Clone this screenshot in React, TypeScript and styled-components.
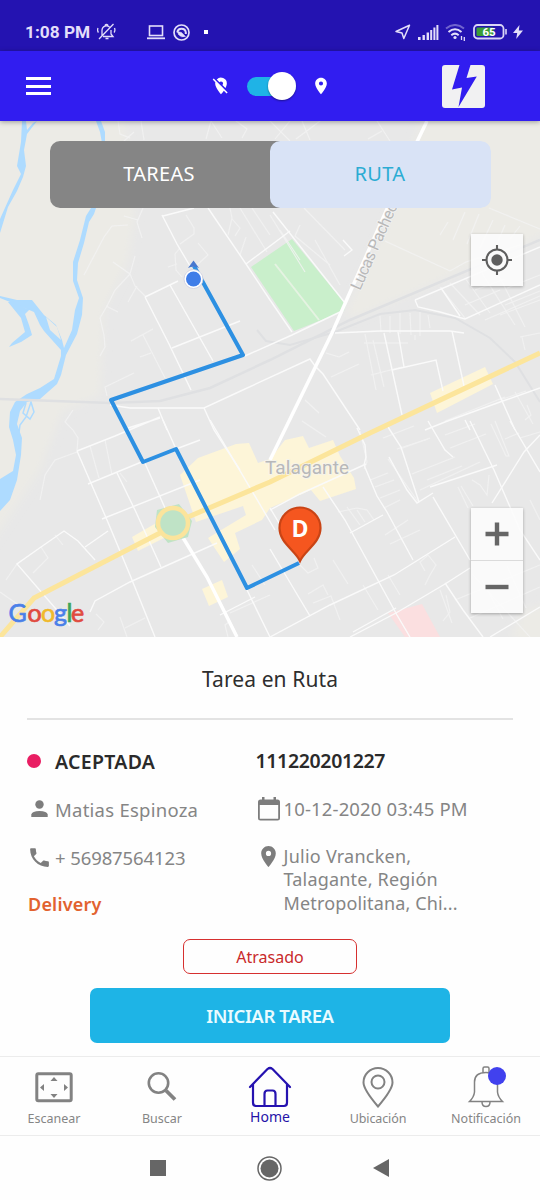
import React from "react";
import styled, { createGlobalStyle } from "styled-components";

const GlobalStyle = createGlobalStyle`
  * { box-sizing: border-box; }
  body { margin: 0; background: #fefefe; font-family: "Noto Sans", "Open Sans", sans-serif; }
  button { font-family: inherit; margin: 0; padding: 0; border: 0; background: none; }
  svg { display: block; flex: none; }
`;

const Screen = styled.div`
  width: 540px;
  height: 1200px;
  display: flex;
  flex-direction: column;
  overflow: hidden;
  background: #fefefe;
`;

const StatusBar = styled.div`
  height: 51px;
  flex: none;
  display: flex;
  align-items: center;
  padding: 13px 17px 0 25px;
  background: #2413b1;
  color: #e3defa;
`;

const Clock = styled.span`
  font: 700 17.3px/20px Roboto, sans-serif;
  width: 72px;
  white-space: nowrap;
`;

const StatusGroup = styled.div<{ $gap: number; $left?: number }>`
  display: flex;
  align-items: center;
  gap: ${(p) => p.$gap}px;
  margin-left: ${(p) => (p.$left === undefined ? "auto" : `${p.$left}px`)};
`;

const Dot = styled.i`
  width: 3.5px;
  height: 3.5px;
  margin-left: 6px;
  background: #fff;
`;

const Header = styled.header`
  position: relative;
  z-index: 1;
  height: 70px;
  flex: none;
  display: flex;
  align-items: center;
  padding: 0 55px 0 26px;
  background: #311df0;
  color: #fff;
  box-shadow: 0 1px 5px rgba(0, 0, 0, 0.35);
`;

const MenuButton = styled.button`
  width: 25px;
  height: 18px;
  display: flex;
  flex-direction: column;
  justify-content: space-between;
`;

const MenuBar = styled.i`
  height: 3px;
  background: #fff;
`;

const LocationSwitch = styled.div`
  display: flex;
  align-items: center;
  margin-left: 160px;
`;

const Track = styled.div`
  width: 49px;
  height: 19px;
  margin: 0 15px 0 16px;
  border-radius: 10px;
  background: #1fb3e6;
  display: flex;
  align-items: center;
  justify-content: flex-end;
`;

const Knob = styled.i`
  width: 28px;
  height: 28px;
  flex: none;
  border-radius: 50%;
  background: #fff;
  box-shadow: 0 1px 2px rgba(0, 0, 0, 0.4);
`;

const LogoSlot = styled.div`
  margin-left: auto;
`;

const MapArea = styled.section`
  position: relative;
  height: 516px;
  flex: none;
  overflow: hidden;
`;

const Tabs = styled.div`
  position: absolute;
  left: 50px;
  top: 20px;
  width: 441px;
  height: 67px;
  display: flex;
  border-radius: 10px;
  overflow: hidden;
  background: linear-gradient(90deg, #858585 55%, transparent 55%);
`;

const Tab = styled.button<{ $active?: boolean }>`
  flex: ${(p) => (p.$active ? "0 0 221px" : "1")};
  padding: 0 ${(p) => (p.$active ? 1 : 2)}px 2px 0;
  border-radius: ${(p) => (p.$active ? "10px" : "0")};
  background: ${(p) => (p.$active ? "#d9e3f6" : "transparent")};
  color: ${(p) => (p.$active ? "#2bacd3" : "#fff")};
  font-size: 20px;
  letter-spacing: 0.3px;
`;

const MapButton = styled.button`
  width: 52px;
  height: 52px;
  display: flex;
  align-items: center;
  justify-content: center;
  background: rgba(255, 255, 255, 0.86);
`;

const MapControls = styled.div<{ $top: number }>`
  position: absolute;
  right: 17px;
  top: ${(p) => p.$top}px;
  display: flex;
  flex-direction: column;
  gap: 1px;
  background: rgba(200, 200, 200, 0.4);
  box-shadow: 0 1px 3px rgba(0, 0, 0, 0.3);
`;

const Task = styled.section`
  height: 419px;
  flex: none;
  display: flex;
  flex-direction: column;
  align-items: center;
`;

const Title = styled.h1`
  width: 486px;
  height: 83px;
  flex: none;
  margin: 0;
  text-align: center;
  font-size: 21px;
  line-height: 84px;
  font-weight: 400;
  letter-spacing: 0.1px;
  color: #2e2e2e;
  border-bottom: 2px solid #e3e3e3;
`;

const Details = styled.div`
  width: 486px;
  height: 219px;
  flex: none;
  display: grid;
  grid-template-columns: 228.5px 1fr;
  padding-top: 17px;
`;

const Column = styled.div`
  display: flex;
  flex-direction: column;
`;

const Row = styled.div<{ $h?: number; $spacing?: number }>`
  height: ${(p) => p.$h ?? 48}px;
  display: flex;
  align-items: center;
  font-size: 18.5px;
  color: #858585;
  white-space: nowrap;
  letter-spacing: ${(p) => p.$spacing ?? 0}px;
`;

const IconCell = styled.span<{ $w: number; $left?: number }>`
  width: ${(p) => p.$w}px;
  flex: none;
  padding-left: ${(p) => p.$left ?? 0}px;
  color: #7d7d7d;
`;

const Strong = styled.span<{ $spacing: number }>`
  font-size: 19.5px;
  font-weight: 600;
  color: #2a2a2a;
  letter-spacing: ${(p) => p.$spacing}px;
`;

const StateDot = styled.i`
  width: 14px;
  height: 14px;
  flex: none;
  margin-right: 14px;
  border-radius: 50%;
  background: #e91e63;
`;

const Kind = styled.span`
  font-size: 18px;
  font-weight: 600;
  letter-spacing: 0.2px;
  padding-left: 1px;
  color: #e2622f;
`;

const AddressRow = styled.div`
  display: flex;
  align-items: flex-start;
  padding-top: 11px;
`;

const Address = styled.p`
  margin: 0;
  padding-top: 1px;
  font-size: 18px;
  line-height: 23.4px;
  color: #858585;
  white-space: nowrap;
`;

const AddressLine = styled.span<{ $spacing: number }>`
  display: block;
  letter-spacing: ${(p) => p.$spacing}px;
`;

const LateTag = styled.div`
  width: 174px;
  height: 35px;
  flex: none;
  border: 1.5px solid #d6302f;
  border-radius: 7px;
  color: #c92a2a;
  font-size: 16px;
  line-height: 35px;
  text-align: center;
`;

const StartButton = styled.button`
  width: 360px;
  height: 55px;
  flex: none;
  margin-top: 14px;
  border-radius: 7px;
  background: #1eb4e6;
  color: #e9fbff;
  font-size: 18.5px;
  font-weight: 600;
  letter-spacing: -0.4px;
`;

const BottomNav = styled.nav`
  height: 80px;
  flex: none;
  display: grid;
  grid-template-columns: repeat(5, 108px);
  border-top: 1px solid #ececec;
  border-bottom: 1px solid #ececec;
`;

const NavItem = styled.button<{ $active?: boolean; $spacing?: number }>`
  display: flex;
  flex-direction: column;
  align-items: center;
  padding-top: 7px;
  color: ${(p) => (p.$active ? "#2512a8" : "#858585")};
  font-size: ${(p) => (p.$active ? 14 : 12.5)}px;
  line-height: 18px;
  letter-spacing: ${(p) => p.$spacing ?? 0}px;
`;

const NavIcon = styled.span<{ $active?: boolean }>`
  height: ${(p) => (p.$active ? 44 : 46)}px;
`;

const SystemNav = styled.div`
  height: 64px;
  flex: none;
  display: flex;
  justify-content: center;
  align-items: center;
  gap: 91px;
  padding-right: 1px;
`;

const fineRoads = [
  // west and north-west lanes
  "M84 275 L104 237 L112 226 L128 225", "M118 121 L120 134 L130 138 M124 141 L134 132 M141 121 L144 140",
  "M143 208 L137 222 L142 238 M138 220 L124 216", "M113 262 L130 274 L135 256 M130 274 L135 286 L146 297 M137 286 L128 302 M130 274 L115 290 L107 306 L100 318 L104 335 L105 347 L100 356",
  "M106 306 L118 312", "M131 341 L153 329 M143 335 L165 378 M140 357 L151 353", "M107 396 L105 387 L134 373",
  "M180 248 L175 254 L176 270 L182 277 M168 267 L177 264 M186 215 L194 228 L194 234 L180 244 M198 243 L208 255 L197 265",
  "M230 208 L232 218 L228 235 M232 219 L240 228 L235 236 M240 208 L267 252 M252 208 L270 235 M246 237 L240 255",
  "M206 139 L211 121 L222 138 M236 121 L247 129 L242 138", "M270 121 L290 141 M296 139 L320 121 M302 121 L310 140 M290 121 L275 139",
  "M270 215 L305 272 M280 230 L300 260 M300 225 L295 236 L330 265 M315 240 L340 285 M304 208 L345 250",
  "M377 121 L390 141 M368 139 L382 131",
  // lanes beside the river bend
  "M73 410 L65 422 L73 430 L78 438 L77 451", "M77 452 L55 460 L45 475 L42 490 L40 500",
  "M90 446 L99 478 M105 440 L112 475 M120 473 L127 482",
  // north-east plots
  "M440 235 L448 222 M453 240 L465 212 M467 244 L479 214 M480 248 L493 220 M495 248 L505 225 M510 239 L520 226 M489 208 L540 229",
  "M385 241 L450 271 L466 262 L520 245",
  "M380 316 L381 332 M390 316 V333 M400 313 V334 M410 313 L411 335 M420 312 V336 M428 315 L430 328 M415 335 V340",
  "M365 334 L376 390 M373 340 L384 387 M364 343 H408 M371 375 L402 367 M326 353 L339 357 L349 352 M331 377 L359 364",
  "M440 287 L465 318 M450 283 L480 315 M465 278 L490 313 M480 270 L515 325 M495 268 L525 327 M507 288 L540 275 M505 305 L540 291 M500 315 L540 300 M475 290 L505 279 M465 305 L500 290",
  "M485 320 L540 296 M520 337 L540 333 M522 337 L525 350",
  // south-east blocks
  "M305 400 L319 413 M360 431 L367 462 L364 469 M302 421 L326 437 M383 438 L414 426 M397 449 L428 439",
  "M400 449 L430 438 M412 474 L455 457 M420 490 L480 462 M427 480 L462 466 M495 421 L509 456 L506 456 L491 424 M505 439 L519 433",
  "M370 480 L388 473 M375 487 L394 480 M380 498 L400 490 M384 508 L400 500 M385 535 L408 520 M390 544 L420 530 M388 459 L419 503",
  "M461 486 L473 506 M472 480 L480 485 L487 495 L489 475 M458 487 L468 508",
  "M357 510 L365 522 M347 507 L360 525 M338 512 L357 508 L367 510 L374 520",
  "M308 594 L323 585 L328 595 M313 603 L331 596 L340 620 M333 560 L348 584 M300 565 L308 573 L318 568 L314 558",
  "M363 585 L378 610 M388 575 L400 595 M425 585 L430 575 L436 565 L428 555 L420 562 L425 571",
  "M440 590 L452 623 M446 595 L450 612 L443 621 M472 574 L530 637 M455 600 L540 565 M470 618 L540 587 M482 580 L503 619 M507 566 L526 608",
  "M530 500 L540 520 M520 438 L540 432",
  "M500 400 L526 391 M445 421 L505 397 M445 435 L475 424 M450 448 L486 434 M515 392 L533 424 M527 405 L531 415 L525 420",
  // south-west corner
  "M0 592 L20 606 M17 564 L6 580 M41 547 L48 558 L33 573 M55 535 L63 545 M96 614 L104 622 L98 630 M125 628 L145 618 M120 617 L127 637",
  "M228 637 L225 625 L230 621 M230 613 L270 595 M252 565 L265 585",
];

const roads = [
  "M208 208 L246 264 L270 300 L292 332 M246 264 L290 231 M162 215 L177 244 L190 266 M163 216 L194 208",
  "M145 297 L169 344 L191 390 M145 297 L178 281 M170 285 L213 361 M172 348 L240 321",
  "M110 405 L130 408 H204 L245 389 L310 359 L315 366 L323 374 L360 430 M204 408 L214 430 L240 470 M245 356 L292 335 L340 312",
  "M128 428 L160 418 M158 408 L167 430 M77 451 L115 436 L160 417 M77 451 L107 520 L130 575 L155 637",
  "M88 484 L144 461 M144 461 L165 508 M117 473 L135 510 L161 567 M102 519 L200 480 M85 547 L108 531",
  "M95 560 L78 541 L64 531 L41 547 L17 564 L62 616 L70 626 M90 612 L95 601 L130 582 L217 543",
  "M163 420 L176 449 M210 420 L275 530 M176 449 L200 440 M273 212 L345 303",
  "M343 240 L352 250 L344 256",
  "M335 333 L380 331 L450 331 L464 333 M384 333 L402 415 M398 332 L404 367 M392 370 L436 360 L443 391 M452 331 L464 386",
  "M415 300 L418 307 L440 312 L465 319 L540 285 M415 300 L540 247 M441 288 L460 316",
  "M270 508 L285 533 M323 487 L345 520 L397 615 L410 637 M270 510 L300 494 L366 464",
  "M357 428 L365 445 L366 457 L364 465 M270 549 L310 616 M364 465 L377 496 L387 512 L413 560",
  "M388 427 L401 447 L419 502 M428 421 L445 450 L453 457 M430 487 L497 465 M389 457 L407 490 L417 503 L433 493",
  "M433 497 L470 560 M470 421 L494 470 L520 530 L540 560",
  "M540 435 L524 452 L492 503 M510 421 L540 472",
  "M270 637 L330 605 L394 575 L455 537 M350 533 L383 515 M350 637 L396 613 L445 584 L470 568 M353 632 L396 608",
  "M445 583 L463 610 L483 637 M540 607 L490 637",
  "M425 430 L445 422 L500 402 L540 388 M495 385 L515 430 M465 420 L470 430",
  "M220 615 L255 597 M247 590 L270 637",
];

const wordmark = [
  { char: "G", x: 8.5, color: "#4a7fe8" },
  { char: "o", x: 27.5, color: "#e04a3f" },
  { char: "o", x: 41, color: "#f0b92c" },
  { char: "g", x: 54, color: "#4a7fe8" },
  { char: "l", x: 66.5, color: "#3da45a" },
  { char: "e", x: 71, color: "#e04a3f" },
];

const MapDrawing = () => (
  <svg width="540" height="516" viewBox="0 121 540 516">
    <defs>
      <filter id="soft" x="-10%" y="-10%" width="120%" height="120%">
        <feGaussianBlur stdDeviation="4" />
      </filter>
    </defs>
    <rect y="121" width="540" height="516" fill="#e8e8e8" />
    <g fill="#ecebe6" filter="url(#soft)">
      <path d="M-20 100 H122 L135 215 L128 262 L104 310 L100 395 L62 412 L40 470 L-20 560 Z" />
      <path d="M428 100 H560 V228 L355 318 L345 314 L395 205 Z" />
      <path d="M510 637 L525 610 L560 600 V660 Z" />
    </g>
    <g fill="#aedbff">
      <path d="M22 121 H26 L27 130 L33 123 L37 121 L27 134 L24 150 L26 166 L23 177 L17 191 L8 207 L0 233 V219 L13 190 L21 174 L17 166 L21 142 Z" />
      <path d="M96 121 H101 L105 132 L105 143 L102 143 L100 132 Z" />
      <path d="M91 208 L96 208 L94 214 L89 222 L84 243 L78 263 L77 280 L83 298 L82 315 L77 334 L66 355 L61 375 L57 384 L40 399 L27 402 L20 411 L17 424 L22 438 L21 455 L17 480 L10 500 L0 511 V479 L13 471 L16 455 L13 440 L9 427 L10 412 L15 402 L27 394 L40 388 L54 379 L61 356 L61 350 L44 331 L40 325 L34 312 L15 304 L0 298 V296 L17 300 L32 300 L44 315 L56 325 L62 340 L64 348 L72 330 L75 310 L79 298 L73 281 L73 262 L80 240 L86 216 Z" />
      <path d="M15 302 L25 308 L30 309 L25 314 L29 325 L32 335 L21 342 L9 347 L12 343 L25 332 L21 318 L8 302 Z" />
    </g>
    <path d="M26 403 L23 413 L30 419 L34 412 L31 402 L26 417 L20 425 L18 440" fill="none" stroke="#aedbff" strokeWidth="1.5" />
    <path d="M46 317 L57 327 L61 340 L50 330 Z" fill="#ecebe6" />

    <path d="M0 399 L110 403 L160 401 L210 388 L270 360 L350 320 L540 240" fill="none" stroke="#dfe0e2" strokeWidth="2.5" />
    <path d="M257 330 L266 341 L290 345 L335 332 L380 314 L415 310 L455 318 L490 338 L515 362 L540 402" fill="none" stroke="#dfe0e2" strokeWidth="2" />

    <path d="M251 267 L292 239 L346 305 L344 311 L294 331 Z" fill="#c9efcb" />
    <path d="M275 264 L319 320" stroke="#e5f3e2" strokeWidth="2" />

    <g fill="#fdf5d8">
      <path d="M180 475 L198 458 L236 444 L249 443 L258 463 L270 459 L285 440 L303 436 L309 448 L333 440 L340 456 L354 478 L356 489 L320 501 L311 490 L270 508 L262 520 L235 533 L240 549 L224 562 L208 538 L246 515 L243 506 L196 522 Z" />
      <path d="M132 537 L158 522 L164 538 L138 551 Z" />
      <path d="M202 589 L222 580 L228 597 L209 606 Z" />
      <path d="M430 393 L485 367 L493 384 L437 413 Z" />
    </g>
    <path d="M388 613 L422 604 L440 637 H405 Z" fill="#fbdfe0" />

    <g fill="none" stroke="#f3f3f3" strokeWidth="1.1" opacity="0.85">
      {fineRoads.map((d) => <path key={d} d={d} />)}
    </g>
    <g fill="none" stroke="#fafafa" strokeWidth="1.4">
      {roads.map((d) => <path key={d} d={d} />)}
    </g>
    <path d="M427 121 L415 146 L351 290 L332 333 L270 460" fill="none" stroke="#fff" strokeWidth="3.5" />
    <path d="M182 536 L207 577 L237 637" fill="none" stroke="#fff" strokeWidth="3.5" />

    <path d="M0 637 L34 598 L160 533 M188 517 L270 482 L370 433 L540 353" fill="none" stroke="#fce59b" strokeWidth="5" />
    <path d="M157 510 L179 504 L192 521 L188 537 L168 543 L155 527 Z" fill="#bfe3c6" />
    <circle cx="173" cy="523" r="15" fill="#bfe3c6" stroke="#fbe49c" strokeWidth="4.5" />

    <text x="265" y="473.500" fontFamily="Roboto, sans-serif" fontSize="19" fill="#b8b8b8" stroke="#f3f3f0" strokeWidth="1.500" paintOrder="stroke" textLength="84">Talagante</text>
    <text transform="translate(360 291) rotate(-66)" fontFamily="Roboto, sans-serif" fontSize="16" fill="#b9b9b9" stroke="#f3f3f3" strokeWidth="1.500" paintOrder="stroke" textLength="102">Lucas Pacheco</text>

    <path d="M194 266 L243 355 L111 400 L143 462 L176 449 L247 588 L299 563" fill="none" stroke="#2d90e2" strokeWidth="4" strokeLinejoin="round" />
    <path d="M188 268 L193.500 260.500 L199 268 Q193.500 265.500 188 268 Z" fill="#4878cf" />
    <circle cx="193.500" cy="279" r="9.500" fill="#fff" stroke="#ccd" strokeWidth="0.800" />
    <circle cx="193.500" cy="279" r="7.500" fill="#3f7de8" />
    <path d="M300 561 C295 550 279.500 543 279.500 528 A20.500 20.500 0 0 1 320.500 528 C320.500 543 305 550 300 561 Z" fill="#f5561f" stroke="#c94415" strokeWidth="2.200" />
    <text x="300" y="537" textAnchor="middle" fontFamily="Open Sans, sans-serif" fontWeight="700" fontSize="23" fill="#fff">D</text>

    <text y="621.500" fontFamily="Lato, sans-serif" fontSize="25" strokeWidth="0.700">
      {wordmark.map((l) => (
        <tspan key={l.x} x={l.x} fill={l.color} stroke={l.color}>{l.char}</tspan>
      ))}
    </text>
  </svg>
);

const MutedBellIcon = () => (
  <svg width="19" height="18" viewBox="0 0 19 18" fill="none" stroke="currentColor" strokeWidth="1.300">
    <path d="M5 12.500 V7 A4.500 4.500 0 0 1 12.500 4 M14 7 V11 L16 13.500 H6 M8 2.500 Q9.500 0.500 11 2.500 M8.500 15.500 H11.500 M1 5 Q0 7.500 1.500 9.500 M17.500 5 Q18.500 7.500 17 9.500 M2 16 L16.500 1" />
  </svg>
);

const LaptopIcon = () => (
  <svg width="18" height="15" viewBox="0 0 18 15" fill="none" stroke="currentColor" strokeWidth="1.600">
    <rect x="2.500" y="1" width="13" height="9.500" />
    <path d="M0 13.300 H18" strokeWidth="1.800" />
  </svg>
);

const RingIcon = () => (
  <svg width="17" height="17" viewBox="0 0 17 17" fill="none" stroke="currentColor">
    <circle cx="8.500" cy="8.500" r="7.500" strokeWidth="1.700" />
    <path d="M4.300 8.500 A4.300 4.300 0 0 1 12.800 8.500 V10" strokeWidth="2" />
    <path d="M4.500 7.500 L8.500 8.500 L12.500 12.500 Q8 14 5.500 10.500 Z" fill="currentColor" strokeWidth="0.500" />
  </svg>
);

const LocationArrowIcon = () => (
  <svg width="16" height="16" viewBox="0 0 16 16" fill="none" stroke="currentColor" strokeWidth="1.500" strokeLinejoin="round">
    <path d="M14.500 1.200 L1 7.500 L7 9 L8.800 14.500 Z" />
  </svg>
);

const SignalIcon = () => (
  <svg width="21" height="15" viewBox="0 0 21 15" fill="currentColor">
    <path d="M0 12h2.600v3H0zM4.500 10h2.400v5H4.500zM8.600 7.500h2.400V15H8.600zM12.200 5h2V15h-2zM15.400 2.500h2V15h-2zM18.400 0h2V15h-2z" />
  </svg>
);

const WifiIcon = () => (
  <svg width="21" height="17" viewBox="0 0 21 17" fill="none" stroke="currentColor" strokeWidth="2">
    <path d="M1 4.500 Q10 -2.500 19 4.500" opacity="0.400" />
    <path d="M3.500 8 Q10 2.500 16.500 8 M6.300 11.200 Q10 8 13.700 11.200" />
    <circle cx="10" cy="13.500" r="1.600" fill="currentColor" stroke="none" />
    <path d="M16.500 12 V16 M19.300 13 V17" strokeWidth="1.300" />
  </svg>
);

const BatteryIcon = () => (
  <svg width="34" height="16" viewBox="0 0 34 16">
    <rect x="1" y="1" width="29.500" height="13.500" rx="3.500" fill="none" stroke="#dad5f7" strokeWidth="1.800" />
    <rect x="3.500" y="3.500" width="17" height="8.500" rx="1" fill="#3b9d35" />
    <rect x="32.200" y="5" width="1.600" height="5.500" fill="#dad5f7" />
    <text x="16" y="12" textAnchor="middle" fontFamily="Roboto, sans-serif" fontWeight="700" fontSize="11.500" fill="#fff">65</text>
  </svg>
);

const ChargeIcon = () => (
  <svg width="10" height="14" viewBox="0 0 10 14" fill="currentColor">
    <path d="M6.500 0 L0 8 H4.200 L3.200 14 L10 5.500 H5.800 Z" />
  </svg>
);

const PlaceIcon = ({ size, off }: { size: number; off?: boolean }) => (
  <svg width={size} height={size} viewBox="0 0 24 24" fill="currentColor">
    {off ? (
      <path d="M12 6.500A2.500 2.500 0 0 1 14.500 9c0 .740-.330 1.390-.830 1.850l3.630 3.630c.980-1.860 1.700-3.800 1.700-5.480A7 7 0 0 0 6.910 4.150l3.270 3.270c.460-.560 1.100-.920 1.820-.920m4.370 9.600-4.630-4.630-.110-.110L3.270 3 2 4.270l3.180 3.180C5.070 7.950 5 8.470 5 9c0 5.250 7 13 7 13s1.670-1.850 3.380-4.350L18.730 21 20 19.730z" />
    ) : (
      <path d="M12 2C8.130 2 5 5.130 5 9c0 5.250 7 13 7 13s7-7.750 7-13c0-3.870-3.130-7-7-7m0 9.500a2.500 2.500 0 0 1 0-5 2.500 2.500 0 0 1 0 5" />
    )}
  </svg>
);

const BoltLogo = () => (
  <svg width="43" height="43" viewBox="0 0 43 43">
    <rect width="43" height="43" rx="3" fill="#f1f1f2" />
    <path d="M17.500 0 L10 24.500 L20 22.500 L16.500 42 L34.800 11.500 L24.500 13 L28.500 0 Z" fill="#311df0" />
  </svg>
);

const TargetIcon = () => (
  <svg width="30" height="30" viewBox="0 0 30 30" fill="none" stroke="#5f5f5f" strokeWidth="2.100">
    <circle cx="15" cy="15" r="10.500" />
    <circle cx="15" cy="15" r="5.700" fill="#5f5f5f" stroke="none" />
    <path d="M15 0 V4.500 M15 25.500 V30 M0 15 H4.500 M25.500 15 H30" />
  </svg>
);

const ZoomIcon = ({ plus }: { plus?: boolean }) => (
  <svg width="24" height="24" viewBox="0 0 24 24" fill="none" stroke="#666" strokeWidth="4.400">
    <path d={plus ? "M0.500 12 H23.500 M12 0.500 V23.500" : "M0.500 12 H23.500"} />
  </svg>
);

const PersonIcon = () => (
  <svg width="17" height="18" viewBox="0 0 17 18" fill="currentColor">
    <circle cx="8.500" cy="4.500" r="4.200" />
    <path d="M0.300 17 V14.500 Q1 11 8.500 11 Q16 11 16.700 14.500 V17 Z" />
  </svg>
);

const PhoneIcon = () => (
  <svg width="25" height="25" viewBox="0 0 24 24" fill="currentColor">
    <path d="M6.620 10.790c1.440 2.830 3.760 5.140 6.590 6.590l2.200-2.200c.270-.270.670-.360 1.020-.240 1.120.370 2.330.570 3.570.570.550 0 1 .450 1 1V20c0 .550-.450 1-1 1-9.390 0-17-7.610-17-17 0-.550.450-1 1-1h3.500c.550 0 1 .450 1 1 0 1.250.200 2.450.570 3.570.110.350.030.740-.250 1.020z" />
  </svg>
);

const CalendarIcon = () => (
  <svg width="22" height="24" viewBox="0 0 22 24">
    <path d="M4 0h2.500v2.500h9V0H18v2.500h1.500Q22 2.500 22 5v16Q22 23.500 19.500 23.500h-17Q0 23.500 0 21V5Q0 2.500 2.500 2.500H4zM1.800 8v13.800h18.400V8z" fill="currentColor" fillRule="evenodd" />
  </svg>
);

const ScanIcon = () => (
  <svg width="38" height="44" viewBox="0 0 38 44">
    <rect x="1.800" y="9.800" width="34.400" height="27" rx="1.500" fill="none" stroke="#828282" strokeWidth="3" />
    <path d="M15.500 17 L19 13 L22.500 17Z M15.500 30 L19 34 L22.500 30Z M9 20 L5 23.500 L9 27Z M29 20 L33 23.500 L29 27Z" fill="#828282" />
  </svg>
);

const SearchIcon = () => (
  <svg width="32" height="44" viewBox="0 0 32 44" fill="none" stroke="#828282">
    <circle cx="12.500" cy="19" r="9.700" strokeWidth="2.600" />
    <path d="M20 26.500 L29 35.500" strokeWidth="3.800" />
  </svg>
);

const HomeIcon = () => (
  <svg width="44" height="44" viewBox="0 0 44 44" fill="none" stroke="#2512b0" strokeWidth="2.200" strokeLinejoin="round" strokeLinecap="round">
    <path d="M2 23 L19.500 5 Q22 3 24.500 5 L42 23 M5 20.500 V38.500 Q5 42 8 42 H36 Q39 42 39 38.500 V20.500 M16.500 42 V30 Q16.500 26.500 19.500 26.500 H24.500 Q27.500 26.500 27.500 30 V42" />
  </svg>
);

const UbicacionIcon = () => (
  <svg width="32" height="44" viewBox="0 0 32 44" fill="none" stroke="#828282" strokeWidth="2">
    <path d="M16 42.500 Q1.500 25.500 1.500 18.500 A14.500 14.500 0 0 1 30.500 18.500 Q30.500 25.500 16 42.500 Z" />
    <circle cx="16" cy="18" r="6.500" />
  </svg>
);

const BellIcon = () => (
  <svg width="42" height="44" viewBox="-2 0 42 44" fill="none" stroke="#828282" strokeWidth="1.500">
    <path d="M16 9 V4.500 Q16 3 17.500 3 H20.500 Q22 3 22 4.500 V9 M7.500 28 V18 Q7.500 8.500 19 8.500 Q30.500 8.500 30.500 18 V28 Q31 33 35.500 37.500 H2.500 Q7 33 7.500 28 M15 38 Q15 42.500 19 42.500 Q23 42.500 23 38" />
    <circle cx="30" cy="12" r="9" fill="#4141ee" stroke="none" />
  </svg>
);

const SystemIcons = () => (
  <SystemNav>
    <svg width="16" height="16" viewBox="0 0 16 16"><rect width="16" height="16" fill="#666" /></svg>
    <svg width="25" height="25" viewBox="0 0 25 25">
      <circle cx="12.500" cy="12.500" r="11.500" fill="none" stroke="#666" strokeWidth="1.500" />
      <circle cx="12.500" cy="12.500" r="9" fill="#666" />
    </svg>
    <svg width="16" height="18" viewBox="2 0 16 18"><path d="M18 0 V18 L2 9 Z" fill="#666" /></svg>
  </SystemNav>
);

export default function App() {
  return (
    <Screen>
      <GlobalStyle />
      <StatusBar>
        <Clock>1:08 PM</Clock>
        <MutedBellIcon />
        <StatusGroup $gap={8} $left={31}>
          <LaptopIcon />
          <RingIcon />
          <Dot />
        </StatusGroup>
        <StatusGroup $gap={6.5}>
          <LocationArrowIcon />
          <SignalIcon />
          <WifiIcon />
          <BatteryIcon />
          <ChargeIcon />
        </StatusGroup>
      </StatusBar>

      <Header>
        <MenuButton aria-label="Menu"><MenuBar /><MenuBar /><MenuBar /></MenuButton>
        <LocationSwitch>
          <PlaceIcon size={20} off />
          <Track><Knob /></Track>
          <PlaceIcon size={20} />
        </LocationSwitch>
        <LogoSlot><BoltLogo /></LogoSlot>
      </Header>

      <MapArea>
        <MapDrawing />
        <Tabs>
          <Tab>TAREAS</Tab>
          <Tab $active>RUTA</Tab>
        </Tabs>
        <MapControls $top={113}>
          <MapButton><TargetIcon /></MapButton>
        </MapControls>
        <MapControls $top={387}>
          <MapButton><ZoomIcon plus /></MapButton>
          <MapButton><ZoomIcon /></MapButton>
        </MapControls>
      </MapArea>

      <Task>
        <Title>Tarea en Ruta</Title>
        <Details>
          <Column>
            <Row $h={48}><StateDot /><Strong $spacing={0.3}>ACEPTADA</Strong></Row>
            <Row $spacing={0.25}><IconCell $w={28} $left={4}><PersonIcon /></IconCell>Matias Espinoza</Row>
            <Row $spacing={-0.1}><IconCell $w={28}><PhoneIcon /></IconCell>+ 56987564123</Row>
            <Row $h={45}><Kind>Delivery</Kind></Row>
          </Column>
          <Column>
            <Row $h={47}><Strong $spacing={-0.35}>111220201227</Strong></Row>
            <Row $h={49} $spacing={0.15}><IconCell $w={28} $left={2}><CalendarIcon /></IconCell>10-12-2020 03:45 PM</Row>
            <AddressRow>
              <IconCell $w={28}><PlaceIcon size={25} /></IconCell>
              <Address>
                <AddressLine $spacing={0.25}>Julio Vrancken,</AddressLine>
                <AddressLine $spacing={0.2}>Talagante, Región</AddressLine>
                <AddressLine $spacing={0.15}>Metropolitana, Chi...</AddressLine>
              </Address>
            </AddressRow>
          </Column>
        </Details>
        <LateTag>Atrasado</LateTag>
        <StartButton>INICIAR TAREA</StartButton>
      </Task>

      <BottomNav>
        <NavItem><NavIcon><ScanIcon /></NavIcon>Escanear</NavItem>
        <NavItem><NavIcon><SearchIcon /></NavIcon>Buscar</NavItem>
        <NavItem $active><NavIcon $active><HomeIcon /></NavIcon>Home</NavItem>
        <NavItem $spacing={-0.1}><NavIcon><UbicacionIcon /></NavIcon>Ubicación</NavItem>
        <NavItem><NavIcon><BellIcon /></NavIcon>Notificación</NavItem>
      </BottomNav>
      <SystemIcons />
    </Screen>
  );
}
